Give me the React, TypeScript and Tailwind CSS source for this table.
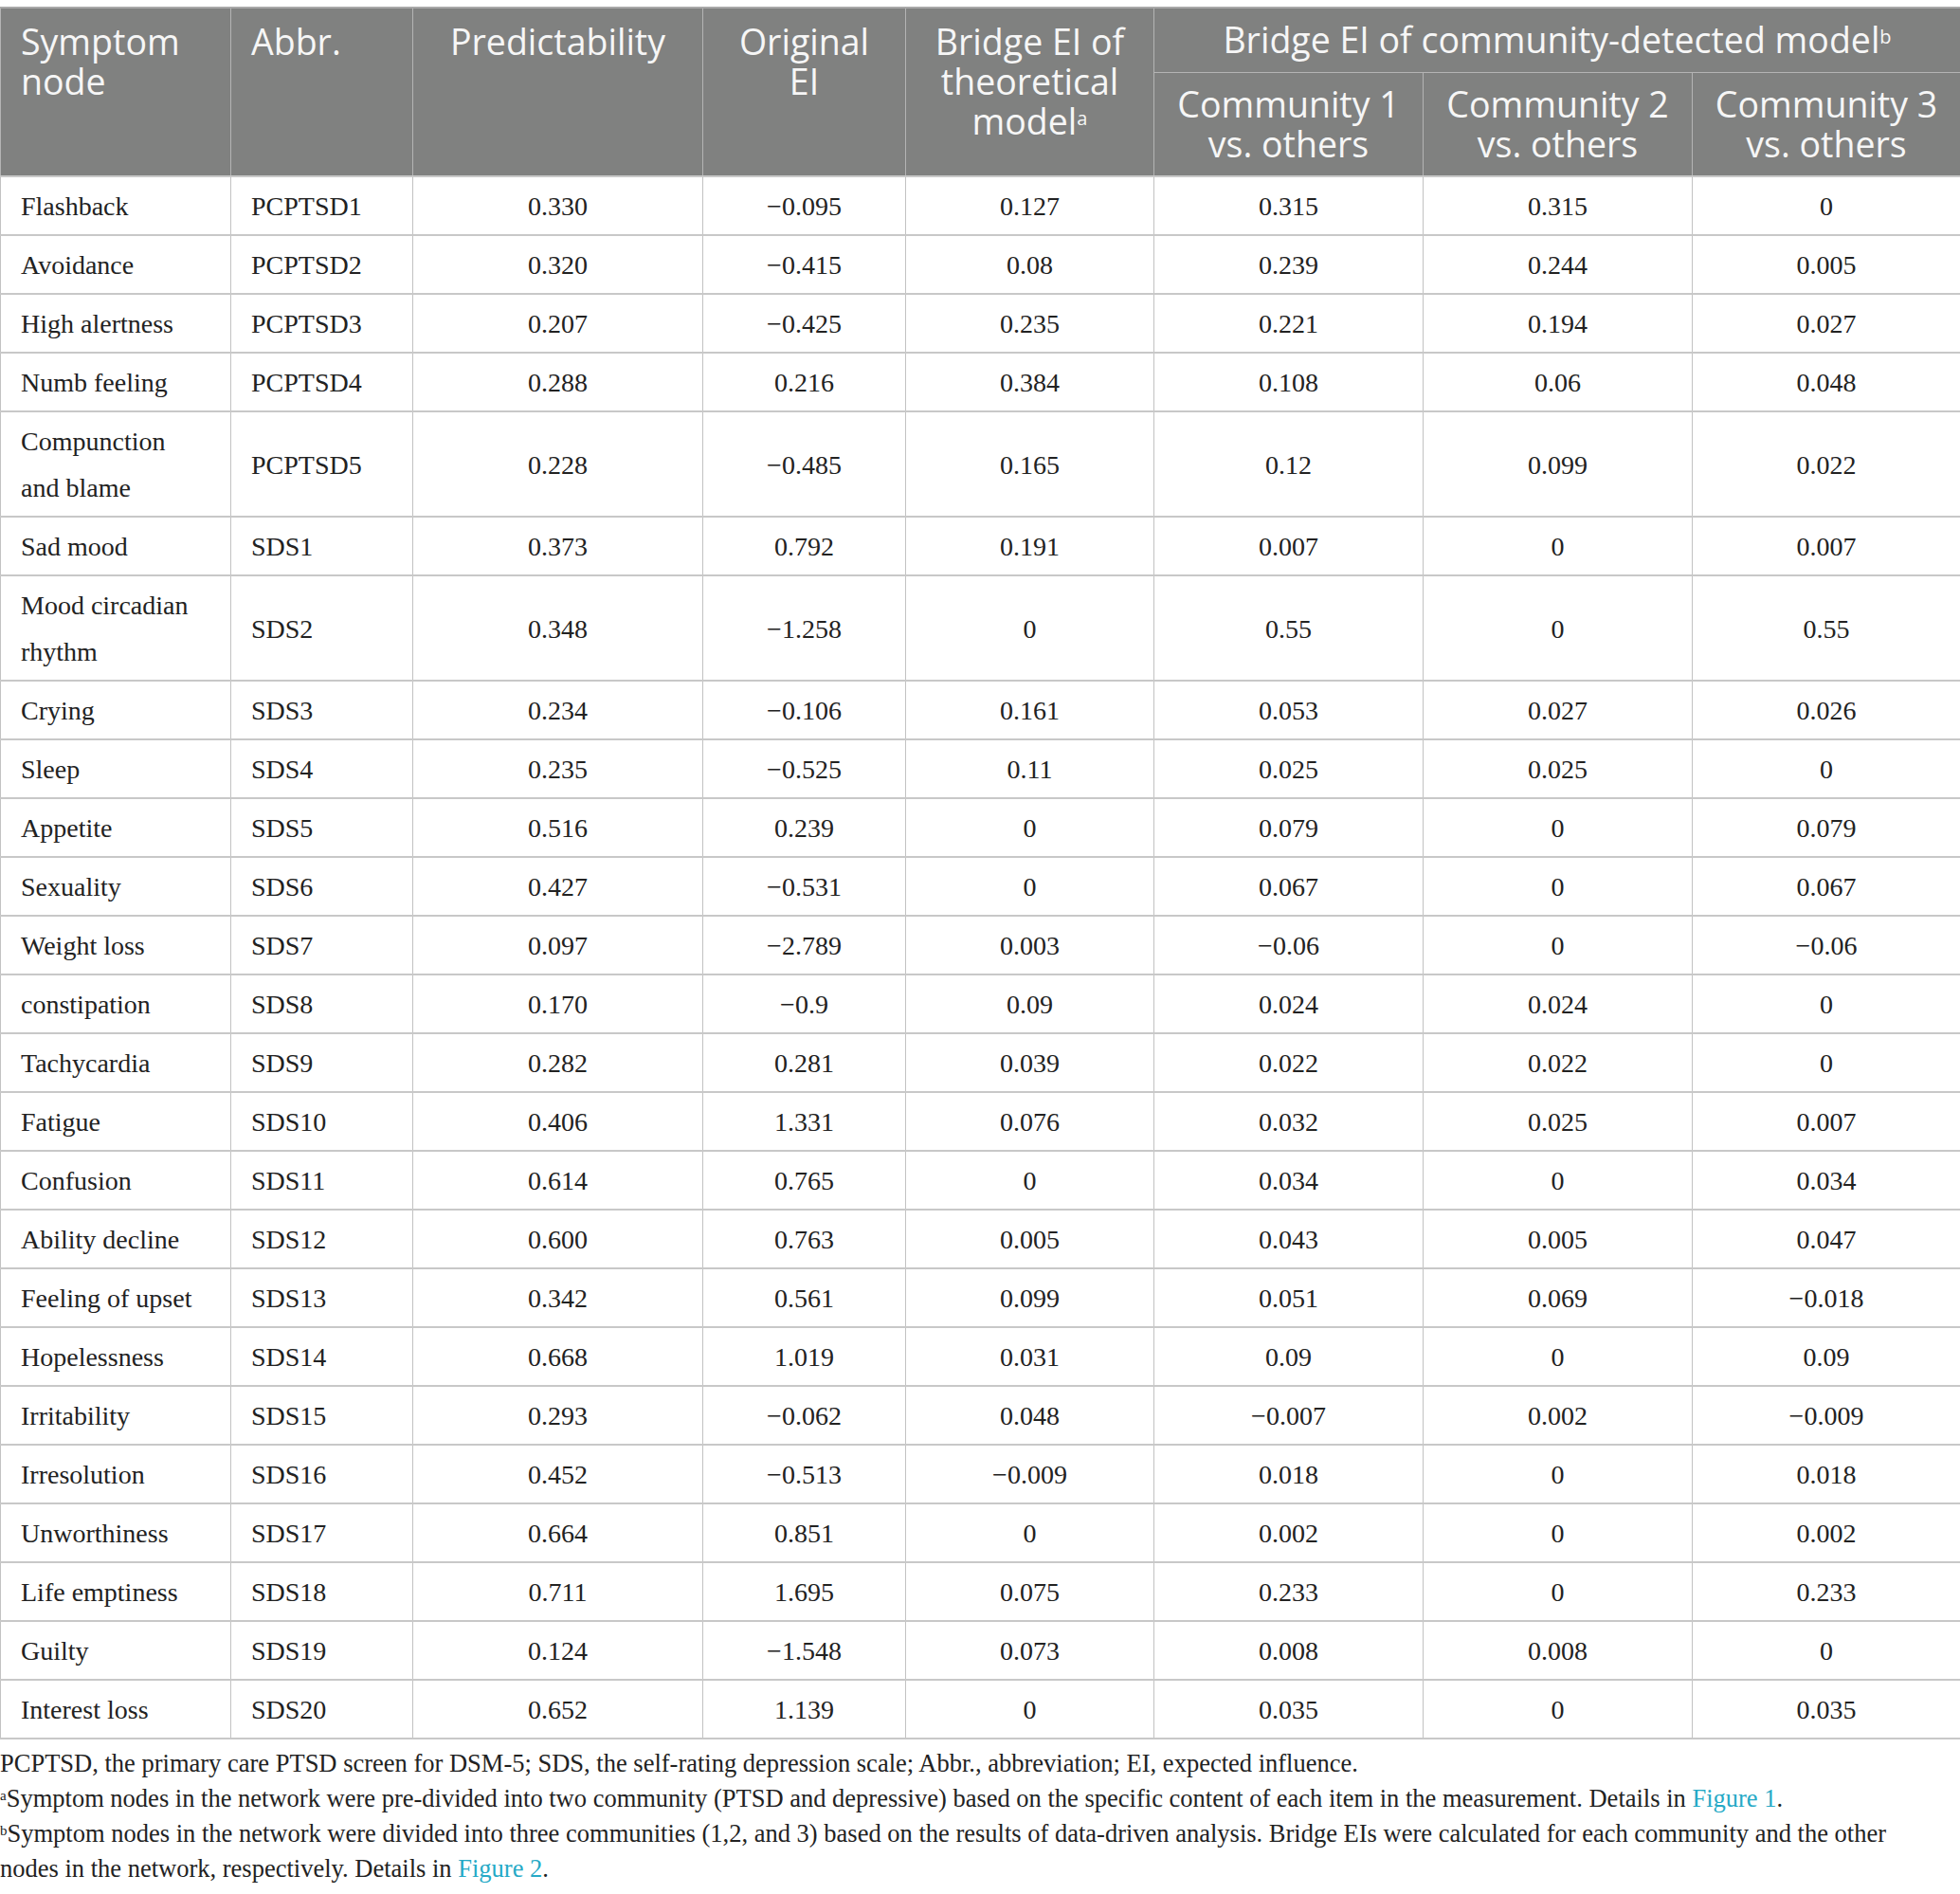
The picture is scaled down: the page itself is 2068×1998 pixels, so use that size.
const rows: [string, string, string, string, string, string, string, string][] = [
  ["Flashback", "PCPTSD1", "0.330", "−0.095", "0.127", "0.315", "0.315", "0"],
  ["Avoidance", "PCPTSD2", "0.320", "−0.415", "0.08", "0.239", "0.244", "0.005"],
  ["High alertness", "PCPTSD3", "0.207", "−0.425", "0.235", "0.221", "0.194", "0.027"],
  ["Numb feeling", "PCPTSD4", "0.288", "0.216", "0.384", "0.108", "0.06", "0.048"],
  ["Compunction|and blame", "PCPTSD5", "0.228", "−0.485", "0.165", "0.12", "0.099", "0.022"],
  ["Sad mood", "SDS1", "0.373", "0.792", "0.191", "0.007", "0", "0.007"],
  ["Mood circadian|rhythm", "SDS2", "0.348", "−1.258", "0", "0.55", "0", "0.55"],
  ["Crying", "SDS3", "0.234", "−0.106", "0.161", "0.053", "0.027", "0.026"],
  ["Sleep", "SDS4", "0.235", "−0.525", "0.11", "0.025", "0.025", "0"],
  ["Appetite", "SDS5", "0.516", "0.239", "0", "0.079", "0", "0.079"],
  ["Sexuality", "SDS6", "0.427", "−0.531", "0", "0.067", "0", "0.067"],
  ["Weight loss", "SDS7", "0.097", "−2.789", "0.003", "−0.06", "0", "−0.06"],
  ["constipation", "SDS8", "0.170", "−0.9", "0.09", "0.024", "0.024", "0"],
  ["Tachycardia", "SDS9", "0.282", "0.281", "0.039", "0.022", "0.022", "0"],
  ["Fatigue", "SDS10", "0.406", "1.331", "0.076", "0.032", "0.025", "0.007"],
  ["Confusion", "SDS11", "0.614", "0.765", "0", "0.034", "0", "0.034"],
  ["Ability decline", "SDS12", "0.600", "0.763", "0.005", "0.043", "0.005", "0.047"],
  ["Feeling of upset", "SDS13", "0.342", "0.561", "0.099", "0.051", "0.069", "−0.018"],
  ["Hopelessness", "SDS14", "0.668", "1.019", "0.031", "0.09", "0", "0.09"],
  ["Irritability", "SDS15", "0.293", "−0.062", "0.048", "−0.007", "0.002", "−0.009"],
  ["Irresolution", "SDS16", "0.452", "−0.513", "−0.009", "0.018", "0", "0.018"],
  ["Unworthiness", "SDS17", "0.664", "0.851", "0", "0.002", "0", "0.002"],
  ["Life emptiness", "SDS18", "0.711", "1.695", "0.075", "0.233", "0", "0.233"],
  ["Guilty", "SDS19", "0.124", "−1.548", "0.073", "0.008", "0.008", "0"],
  ["Interest loss", "SDS20", "0.652", "1.139", "0", "0.035", "0", "0.035"],
];

// header cells: vertical alignment set per cell
const head = "border border-[#b4b4b4] px-[21px] text-[37.5px] leading-[42px] font-normal text-[#f6f6f6]";
const cell = "border-x border-x-[#c2c2c2] border-y-2 border-y-[#c8c8c8] pt-[6px] pb-[5px] align-middle leading-[49px]";

export default function App() {
  return (
    <div className="w-[2068px] bg-white pt-[7px] text-[#222]">
      <table className="w-full table-fixed border-collapse border-t-2 border-[#a8a8a8]">
        <colgroup>
          <col className="w-[243px]" />
          <col className="w-[192px]" />
          <col className="w-[306px]" />
          <col className="w-[214px]" />
          <col className="w-[262px]" />
          <col className="w-[284px]" />
          <col className="w-[284px]" />
          <col className="w-[283px]" />
        </colgroup>
        <thead className="bg-[#808180] font-['Open_Sans',sans-serif]">
          <tr className="h-[68px]">
            <th rowSpan={2} className={`${head} align-top pt-[14px] text-left`}>Symptom node</th>
            <th rowSpan={2} className={`${head} align-top pt-[14px] text-left`}>Abbr.</th>
            <th rowSpan={2} className={`${head} align-top pt-[14px] text-center`}>Predictability</th>
            <th rowSpan={2} className={`${head} align-top pt-[14px] text-center`}>
              Original
              <br />
              EI
            </th>
            <th rowSpan={2} className={`${head} align-top pt-[14px] text-center`}>
              Bridge EI of theoretical model<sup className="text-[20px] leading-none">a</sup>
            </th>
            <th colSpan={3} className={`${head} align-middle py-[10px] text-center`}>
              Bridge EI of community-detected model<sup className="text-[20px] leading-none">b</sup>
            </th>
          </tr>
          <tr className="h-[110px]">
            <th className={`${head} align-middle text-center`}>Community 1 vs. others</th>
            <th className={`${head} align-middle text-center`}>Community 2 vs. others</th>
            <th className={`${head} align-middle text-center`}>Community 3 vs. others</th>
          </tr>
        </thead>
        <tbody className="font-['Liberation_Serif',serif] text-[28px]">
          {rows.map((r) => (
            <tr key={r[1]}>
              <td className={`${cell} px-[21px] text-left`}>
                {r[0].split("|").map((line, i) => (
                  <div key={i}>{line}</div>
                ))}
              </td>
              <td className={`${cell} px-[21px] text-left`}>{r[1]}</td>
              {r.slice(2).map((v, i) => (
                <td key={i} className={`${cell} text-center`}>
                  {v}
                </td>
              ))}
            </tr>
          ))}
        </tbody>
      </table>

      <div className="mt-[7px] font-['Liberation_Serif',serif] text-[26.5px] leading-[37px] text-[#222]">
        <p>PCPTSD, the primary care PTSD screen for DSM-5; SDS, the self-rating depression scale; Abbr., abbreviation; EI, expected influence.</p>
        <p>
          <sup className="text-[15px] leading-none">a</sup>Symptom nodes in the network were pre-divided into two community (PTSD and depressive) based on the specific content of each item in the measurement. Details in{" "}
          <span className="text-[#25a9c6]">Figure 1</span>.
        </p>
        <p>
          <sup className="text-[15px] leading-none">b</sup>Symptom nodes in the network were divided into three communities (1,2, and 3) based on the results of data-driven analysis. Bridge EIs were calculated for each community and the other
          <br />
          nodes in the network, respectively. Details in <span className="text-[#25a9c6]">Figure 2</span>.
        </p>
      </div>
    </div>
  );
}
